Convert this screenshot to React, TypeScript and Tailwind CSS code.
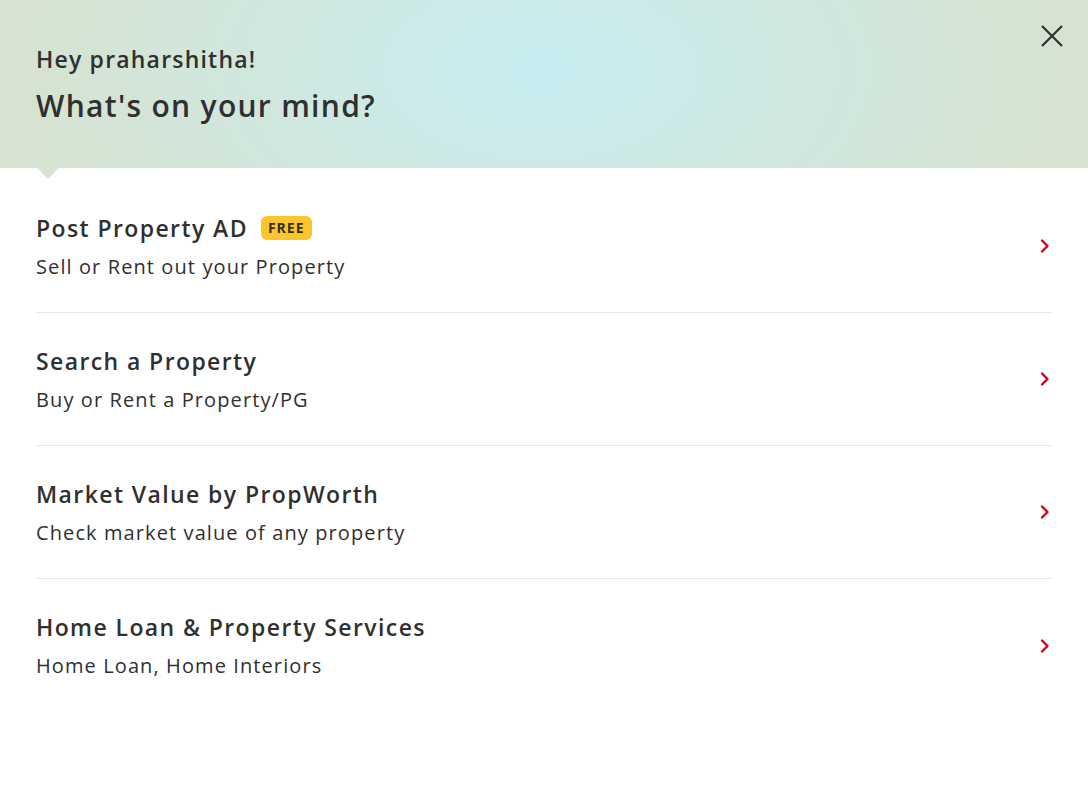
import React from "react";

const items = [
  { title: "Post Property AD", sub: "Sell or Rent out your Property", free: true },
  { title: "Search a Property", sub: "Buy or Rent a Property/PG" },
  { title: "Market Value by PropWorth", sub: "Check market value of any property" },
  { title: "Home Loan & Property Services", sub: "Home Loan, Home Interiors" },
];

function Chevron() {
  return (
    <svg width="12" height="16" viewBox="0 0 12 16" fill="none">
      <path d="M3 2.5 L8.5 8 L3 13.5" stroke="#d0021b" strokeWidth="2.4" strokeLinecap="round" strokeLinejoin="round" />
    </svg>
  );
}

export default function App() {
  return (
    <div className="w-[1088px] h-[791px] bg-white text-[#303030]" style={{ fontFamily: '"Open Sans", sans-serif' }}>
      <div
        className="relative h-[168px] px-[36px] pt-[44px]"
        style={{ background: "radial-gradient(ellipse 520px 300px at 540px 70px, #c8eef2 0%, #cfe8e2 45%, #d6e3d0 100%)" }}
      >
        <div className="text-[23px] font-semibold leading-[30px] tracking-[1.2px]">Hey praharshitha!</div>
        <div className="mt-[13px] text-[30px] font-semibold leading-[38px] tracking-[1.3px]">What's on your mind?</div>
        <button className="absolute right-[24px] top-[24px] w-[24px] h-[24px] flex items-center justify-center">
          <svg width="24" height="24" viewBox="0 0 24 24">
            <path d="M2 2 L22 22 M22 2 L2 22" stroke="#303030" strokeWidth="2.2" />
          </svg>
        </button>
        <div className="absolute left-[37px] top-[168px] w-0 h-0 border-l-[11px] border-r-[11px] border-t-[11px] border-l-transparent border-r-transparent border-t-[#d6e3d0]" />
      </div>
      <div className="px-[36px] pt-[12px]">
        {items.map((it, i) => (
          <div key={i} className={`flex items-center h-[133px] ${i < 3 ? "border-b border-[#e6e6e6]" : ""}`}>
            <div className="flex-1">
              <div className="flex items-center gap-[13px] h-[28px]">
                <span className="text-[23px] font-semibold leading-[28px] tracking-[1.4px]">{it.title}</span>
                {it.free && (
                  <span className="bg-[#fdc52c] rounded-[6px] px-[7px] h-[24px] flex items-center text-[14px] font-bold tracking-[1px]">FREE</span>
                )}
              </div>
              <div className="mt-[13px] text-[20px] leading-[24px] tracking-[1.1px]">{it.sub}</div>
            </div>
            <div className="mr-[1px]"><Chevron /></div>
          </div>
        ))}
      </div>
    </div>
  );
}
